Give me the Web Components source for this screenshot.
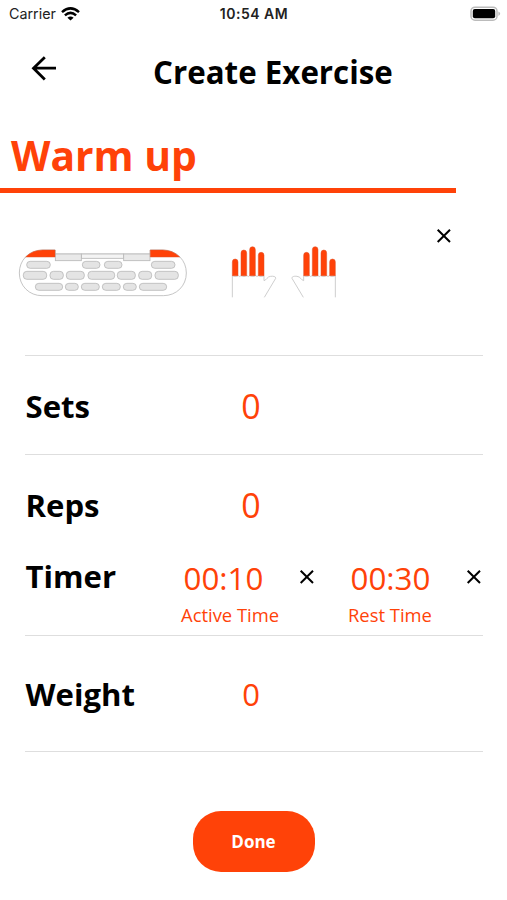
<!DOCTYPE html>
<html lang="en">
<head>
<meta charset="utf-8">
<title>Create Exercise</title>
<style>
    body {
        margin: 0;
        background: #fff;
        color: #000;
        font-family: "Open Sans", sans-serif;
        --accent: #ff4208;
        --line: #dedede;
    }
</style>
</head>
<body>
<create-exercise></create-exercise>

<script>
class StatusBar extends HTMLElement {
    constructor() {
        super();
        this.attachShadow({ mode: 'open' });
        this.shadowRoot.innerHTML = `
            <style>
                :host {
                    display: grid;
                    grid-template-columns: 1fr auto 1fr;
                    align-items: center;
                    height: 28px;
                    padding: 0 7px 0 9px;
                    font: 14.300px/28px Inter, sans-serif;
                    color: #222;
                }

                .carrier {
                    display: flex;
                    align-items: center;
                    gap: 5px;
                }

                .time {
                    font-weight: 600;
                    font-size: 14px;
                    letter-spacing: 0.500px;
                    margin-left: -1px;
                }

                .battery {
                    justify-self: end;
                    margin-right: -1px;
                }

                svg {
                    display: block;
                }
            </style>
            <div class="carrier">
                <span>Carrier</span>
                <svg width="19" height="15" viewBox="0 0 19 15" fill="none" stroke="#000" stroke-width="2.500">
                    <path d="M1 5.100Q9.500 -2.400 18 5.100"/>
                    <path d="M3.900 8.400Q9.500 3.400 15.100 8.400"/>
                    <path d="M9.500 13.600L6.400 10.800Q9.500 8.200 12.600 10.800Z" fill="#000" stroke="none"/>
                </svg>
            </div>
            <span class="time"><slot></slot></span>
            <svg class="battery" width="31" height="16" viewBox="0 0 31 16">
                <rect x="1" y="1.200" width="26" height="13" rx="4" fill="#fff" stroke="#bbb" stroke-width="1.500"/>
                <rect x="2.800" y="3" width="22.400" height="9.300" rx="2" fill="#000"/>
                <path d="M28.400 5.500Q32 7.700 28.400 9.900Z" fill="#bbb"/>
            </svg>
        `;
    }
}

class CloseButton extends HTMLElement {
    constructor() {
        super();
        this.attachShadow({ mode: 'open' });
        this.shadowRoot.innerHTML = `
            <style>
                :host {
                    display: block;
                    width: 16px;
                    height: 16px;
                }

                svg {
                    display: block;
                }
            </style>
            <svg width="16" height="16" viewBox="0 0 16 16" fill="none" stroke="#000" stroke-width="2">
                <path d="M1.700 1.700L14 14M14 1.700L1.700 14"/>
            </svg>
        `;
    }
}

class HangBoard extends HTMLElement {
    constructor() {
        super();
        this.attachShadow({ mode: 'open' });
        // x, y, width of every hold
        const holds = [
            [50, 64, 71], [217, 64, 53], [283, 64, 53], [424, 64, 71],
            [40, 94, 70], [120, 94, 40], [169, 94, 54], [234, 94, 80],
            [322, 94, 54], [386, 94, 39], [435, 94, 70],
            [76, 130, 82], [166, 130, 39], [214, 130, 54], [277, 130, 54],
            [340, 130, 39], [388, 130, 82]
        ];
        this.shadowRoot.innerHTML = `
            <style>
                :host, svg {
                    display: block;
                }
            </style>
            <svg width="170" height="50" viewBox="24 24 510 150" stroke="#b9b9b9" stroke-width="2.500">
                <path d="M136 30H96C55 32 28 61 28 99C28 138 58 167 96 167H460C499 167 529 138 529 99C529 61 501 32 460 30H420V42H136Z" fill="#fff"/>
                <rect x="214" y="42" width="127" height="13" fill="#f4f4f4"/>
                <rect x="136" y="42" width="78" height="20" fill="#e9e9e9"/>
                <rect x="341" y="42" width="79" height="20" fill="#e9e9e9"/>
                <path d="M47 51Q67 30 98 30H135V51Z" fill="#ff4208" stroke="#d8562e" stroke-width="1.500"/>
                <path d="M509 51Q489 30 458 30H421V51Z" fill="#ff4208" stroke="#d8562e" stroke-width="1.500"/>
                ${holds.map(([x, y, w]) => `<rect x="${x}" y="${y}" width="${w}" height="${y === 94 ? 24 : 21}" rx="10.500" fill="#e4e4e4"/>`).join('')}
            </svg>
        `;
    }
}

class HandsPicture extends HTMLElement {
    constructor() {
        super();
        this.attachShadow({ mode: 'open' });
        const hand = `
            <path d="M37 187V122Q46 127 55 122Q59 127 63 122Q72 127 81 122Q85 127 89 122Q98 127 107 122Q111 127 115 122Q124 127 132 122V137C139 136 142 124 152 124C159 123 168 124 167 130L133 187" fill="#fff" stroke="#c4c4c4" stroke-width="2.500"/>
            <path d="M37 122V81Q37 72 45.500 72T54 81V122ZM63 122V54Q63 45 71.500 45T80 54V122ZM89 122V44Q89 35 97.500 35T106 44V122ZM115 122V61Q115 52 123.500 52T132 61V122Z" fill="#ff4208" stroke="#df5026" stroke-width="1.500"/>
        `;
        this.shadowRoot.innerHTML = `
            <style>
                :host, svg {
                    display: block;
                }
            </style>
            <svg width="110" height="54" viewBox="30 30 330 162">
                <g>${hand}</g>
                <g transform="translate(383 0) scale(-1 1)">${hand}</g>
            </svg>
        `;
    }
}

class ExerciseRow extends HTMLElement {
    constructor() {
        super();
        this.attachShadow({ mode: 'open' });
        this.shadowRoot.innerHTML = `
            <style>
                :host {
                    display: grid;
                    grid-template-columns: 152px 1fr;
                    align-items: start;
                    box-sizing: border-box;
                    height: var(--row-height);
                    margin: 0 24px 0 25px;
                    padding-top: var(--row-top);
                    border-bottom: 1px solid var(--line);
                }

                .label {
                    padding-left: 0.500px;
                    font-size: 31.100px;
                    line-height: 45px;
                    font-weight: 700;
                }

                .value {
                    color: var(--accent);
                }
            </style>
            <div class="label"><slot name="label"></slot></div>
            <div class="value"><slot></slot></div>
        `;
    }
}

class TimeField extends HTMLElement {
    constructor() {
        super();
        this.attachShadow({ mode: 'open' });
        this.shadowRoot.innerHTML = `
            <style>
                :host {
                    display: flex;
                    align-items: flex-start;
                    justify-content: space-between;
                }

                .field {
                    padding-left: 4px;
                }

                .time {
                    padding-left: 2.500px;
                    font-size: 31.300px;
                    line-height: 45px;
                }

                .caption {
                    font-size: 18.400px;
                    line-height: 28px;
                    white-space: nowrap;
                }

                close-button {
                    margin-top: 13px;
                }
            </style>
            <div class="field">
                <div class="time"><slot></slot></div>
                <div class="caption"><slot name="caption"></slot></div>
            </div>
            <close-button></close-button>
        `;
    }
}

class CreateExercise extends HTMLElement {
    constructor() {
        super();
        this.attachShadow({ mode: 'open' });
        this.shadowRoot.innerHTML = `
            <style>
                :host {
                    display: flex;
                    flex-direction: column;
                    height: 900px;
                    overflow: hidden;
                }

                header {
                    display: grid;
                    grid-template-columns: 122px 1fr;
                    align-items: start;
                    height: 92px;
                    padding: 22px 0 0 31px;
                    box-sizing: border-box;
                }

                .back {
                    display: block;
                    margin-top: 6px;
                }

                h1 {
                    margin: 0;
                    font-size: 31.300px;
                    line-height: 45px;
                    font-weight: 700;
                }

                .name {
                    width: 456px;
                    height: 73px;
                    box-sizing: border-box;
                    padding: 7px 0 0 11px;
                    border-bottom: 5px solid var(--accent);
                    color: var(--accent);
                    font-size: 40.800px;
                    line-height: 56px;
                    font-weight: 700;
                }

                .grips {
                    display: flex;
                    align-items: flex-start;
                    box-sizing: border-box;
                    height: 163px;
                    margin: 0 24px 0 25px;
                    border-bottom: 1px solid var(--line);
                }

                hang-board {
                    margin: 55px 0 0 -7px;
                }

                hands-picture {
                    margin: 52px 0 0 42px;
                }

                .grips close-button {
                    margin: 35px 31px 0 auto;
                }

                .number {
                    width: 148px;
                    text-align: center;
                    font-size: 34px;
                    line-height: 44px;
                }

                .weight {
                    font-size: 31px;
                }

                .timers {
                    display: flex;
                    gap: 29px;
                    margin-top: 2px;
                }

                time-field {
                    width: 138px;
                }

                button {
                    align-self: center;
                    width: 122px;
                    height: 61px;
                    margin-top: 59px;
                    border: 0;
                    border-radius: 28px;
                    background: var(--accent);
                    color: #fff;
                    font: 700 17px/24px "Open Sans", sans-serif;
                }
            </style>
            <status-bar>10:54 AM</status-bar>
            <header>
                <svg class="back" width="26" height="26" viewBox="0 0 26 26" fill="none" stroke="#000" stroke-width="2.800">
                    <path d="M25 12.200H3M13.800 1.200L2.500 12.200L13.800 23.500"/>
                </svg>
                <h1>Create Exercise</h1>
            </header>
            <div class="name">Warm up</div>
            <div class="grips">
                <hang-board></hang-board>
                <hands-picture></hands-picture>
                <close-button></close-button>
            </div>
            <exercise-row style="--row-height: 99px; --row-top: 28px">
                <span slot="label">Sets</span>
                <div class="number">0</div>
            </exercise-row>
            <exercise-row style="--row-height: 71px; --row-top: 28px; --line: transparent">
                <span slot="label">Reps</span>
                <div class="number">0</div>
            </exercise-row>
            <exercise-row style="--row-height: 110px; --row-top: 28px">
                <span slot="label">Timer</span>
                <div class="timers">
                    <time-field>00:10<span slot="caption">Active Time</span></time-field>
                    <time-field>00:30<span slot="caption">Rest Time</span></time-field>
                </div>
            </exercise-row>
            <exercise-row style="--row-height: 116px; --row-top: 36px">
                <span slot="label">Weight</span>
                <div class="number weight">0</div>
            </exercise-row>
            <button>Done</button>
        `;
    }
}

customElements.define('status-bar', StatusBar);
customElements.define('close-button', CloseButton);
customElements.define('hang-board', HangBoard);
customElements.define('hands-picture', HandsPicture);
customElements.define('exercise-row', ExerciseRow);
customElements.define('time-field', TimeField);
customElements.define('create-exercise', CreateExercise);
</script>
</body>
</html>
